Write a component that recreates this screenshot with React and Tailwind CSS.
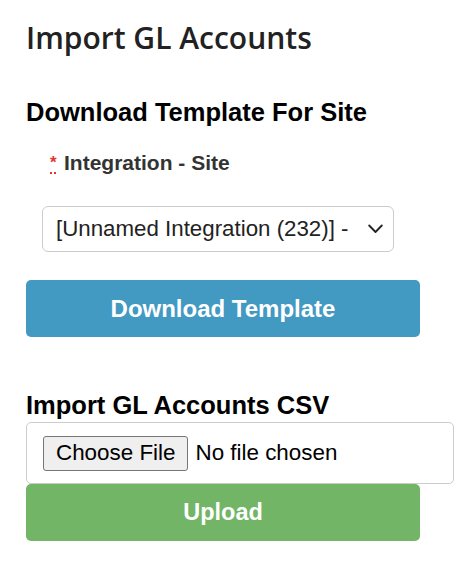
import React from "react";

const ImportGlAccounts = () => {
  return (
    <div className="min-h-screen bg-white px-[26px] pt-[18px] font-['Liberation_Sans',Arial,sans-serif]">
      <h1 className="text-[30px] leading-[40px] font-semibold text-[#222] font-['Open_Sans',sans-serif]">
        Import GL Accounts
      </h1>

      <h2 className="mt-[39px] text-[25.5px] leading-[30px] font-bold text-black">
        Download Template For Site
      </h2>

      <div className="mt-[24px] pl-[24px] flex items-baseline">
        <abbr
          title="required"
          className="w-[10px] mr-[4px] -translate-y-[2px] text-[17px] leading-[24px] font-bold text-[#e3332b] underline decoration-dotted decoration-2 underline-offset-[4px]"
        >
          *
        </abbr>
        <label className="text-[21px] leading-[24px] font-bold text-[#333]">
          Integration - Site
        </label>
      </div>

      <div className="mt-[29px] pl-[16px]">
        <div className="relative w-[352px] h-[46px] rounded-[6px] border border-[#ccc] flex items-center pl-[13px]">
          <span className="text-[22.3px] text-[#222]">
            [Unnamed Integration (232)] -
          </span>
          <svg
            className="absolute right-[10px] top-[17px]"
            width="15"
            height="10"
            viewBox="0 0 15 10"
            fill="none"
          >
            <path
              d="M1.2 1.5 L7.5 8 L13.8 1.5"
              stroke="#222"
              strokeWidth="1.8"
              strokeLinecap="round"
              strokeLinejoin="round"
            />
          </svg>
        </div>
      </div>

      <button className="mt-[28px] w-[394px] h-[57px] rounded-[5px] bg-[#4299c2] text-white text-[24px] font-bold">
        Download Template
      </button>

      <h2 className="mt-[53px] text-[25.5px] leading-[30px] font-bold text-black">
        Import GL Accounts CSV
      </h2>

      <div className="mt-[2px] w-[428px] h-[62px] rounded-[5px] border border-[#ccc] flex items-center pl-[16px]">
        <span className="h-[35px] px-[12px] flex items-center rounded-[3px] border border-[#767676] bg-[#efefef] text-[22.4px] text-black">
          Choose File
        </span>
        <span className="ml-[7px] text-[22.4px] text-black">No file chosen</span>
      </div>

      <button className="w-[394px] h-[57px] rounded-[5px] bg-[#72b566] text-white text-[23.5px] font-bold">
        Upload
      </button>
    </div>
  );
};

export default ImportGlAccounts;
